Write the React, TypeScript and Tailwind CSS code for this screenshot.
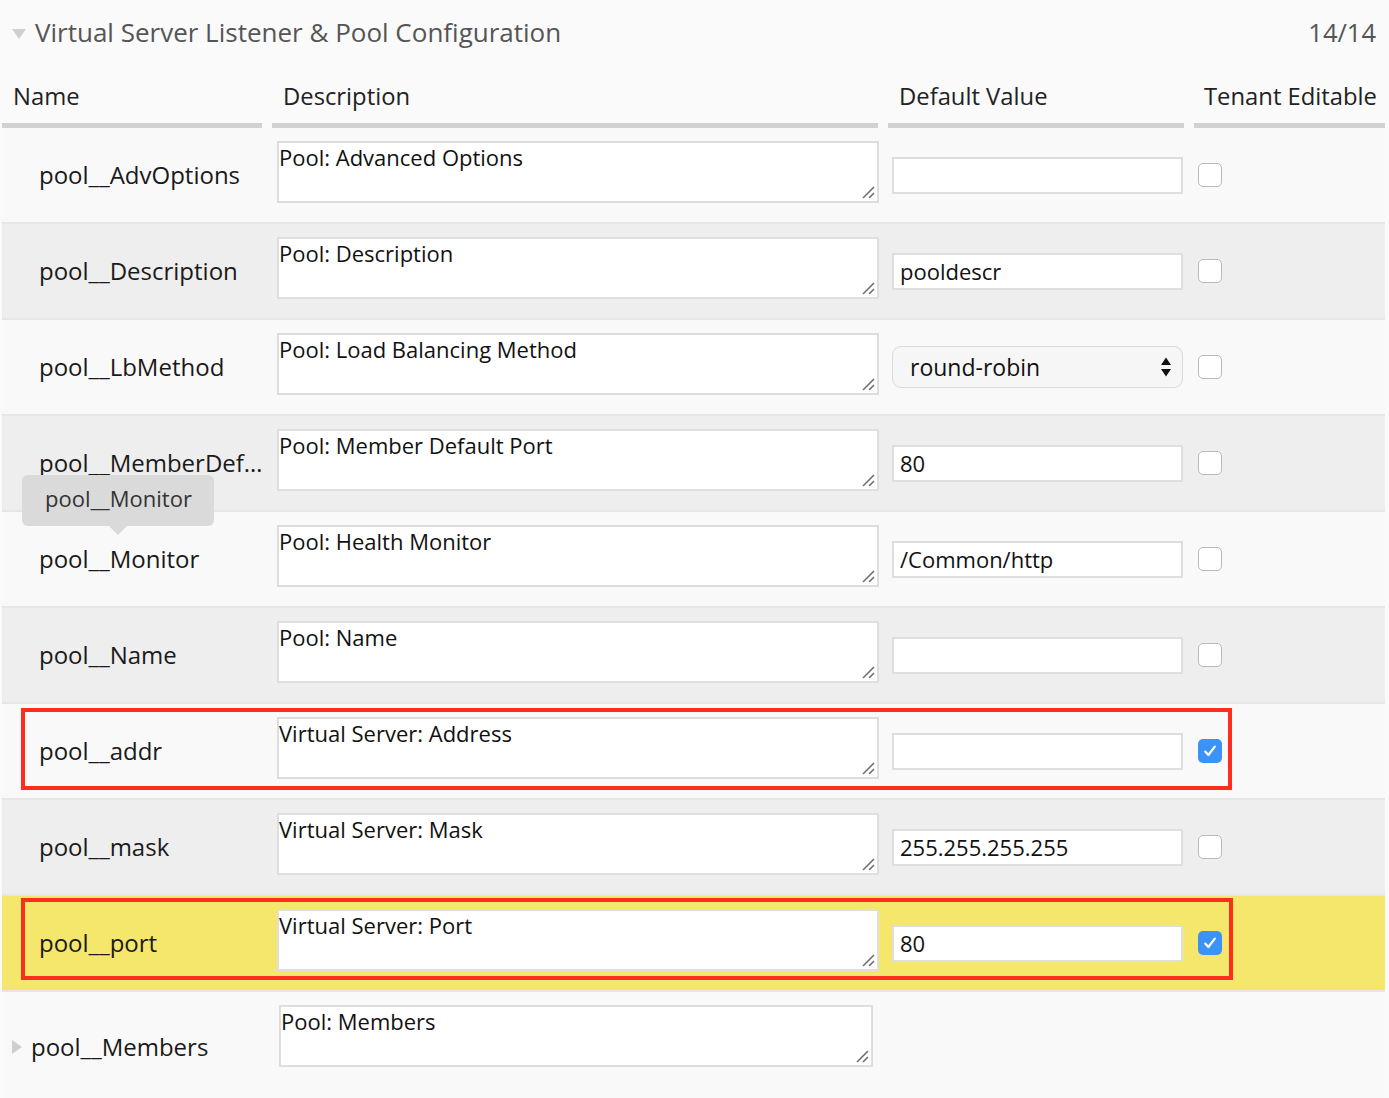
import React from "react";

type Row = {
  name: string;
  desc: string;
  value?: string;
  kind: "input" | "select" | "none";
  checked?: boolean;
  bg: string;
  box?: "a" | "b";
  tooltip?: boolean;
};

const rows: Row[] = [
  { name: "pool__AdvOptions", desc: "Pool: Advanced Options", value: "", kind: "input", bg: "bg-[#f9f9f9]" },
  { name: "pool__Description", desc: "Pool: Description", value: "pooldescr", kind: "input", bg: "bg-[#eeeeee]" },
  { name: "pool__LbMethod", desc: "Pool: Load Balancing Method", value: "round-robin", kind: "select", bg: "bg-[#f9f9f9]" },
  { name: "pool__MemberDefaultPort", desc: "Pool: Member Default Port", value: "80", kind: "input", bg: "bg-[#eeeeee]", tooltip: true },
  { name: "pool__Monitor", desc: "Pool: Health Monitor", value: "/Common/http", kind: "input", bg: "bg-[#f9f9f9]" },
  { name: "pool__Name", desc: "Pool: Name", value: "", kind: "input", bg: "bg-[#eeeeee]" },
  { name: "pool__addr", desc: "Virtual Server: Address", value: "", kind: "input", bg: "bg-[#f9f9f9]", checked: true, box: "a" },
  { name: "pool__mask", desc: "Virtual Server: Mask", value: "255.255.255.255", kind: "input", bg: "bg-[#eeeeee]" },
  { name: "pool__port", desc: "Virtual Server: Port", value: "80", kind: "input", bg: "bg-[#f5e66c]", checked: true, box: "b" },
];

function Resizer() {
  return (
    <svg className="absolute right-[2px] bottom-[2px]" width="14" height="14" viewBox="0 0 14 14">
      <line x1="2" y1="13" x2="13" y2="2" stroke="#6e6e6e" strokeWidth="1.6" />
      <line x1="8" y1="13" x2="13" y2="8" stroke="#6e6e6e" strokeWidth="1.6" />
    </svg>
  );
}

function TextArea({ text, w }: { text: string; w: string }) {
  return (
    <div className={`relative ${w} h-[62px] shrink-0 bg-white border-2 border-[#dedede] pt-[1px] text-[22px] leading-[27px] text-[#111]`}>
      {text}
      <Resizer />
    </div>
  );
}

function Checkbox({ checked }: { checked?: boolean }) {
  if (checked) {
    return (
      <div className="w-[24px] h-[24px] shrink-0 rounded-[5px] bg-[#3b93f8] flex items-center justify-center">
        <svg width="16" height="16" viewBox="0 0 16 16">
          <path d="M3.2 8.6 L6.4 12 L12.8 3.6" fill="none" stroke="white" strokeWidth="2.2" strokeLinecap="round" strokeLinejoin="round" />
        </svg>
      </div>
    );
  }
  return <div className="w-[24px] h-[24px] shrink-0 rounded-[5px] bg-white border border-[#b9b9b9]" />;
}

export default function App() {
  return (
    <div
      className="w-[1389px] h-[1098px] overflow-hidden bg-[#fafafa] text-[#222]"
      style={{ fontFamily: '"Open Sans", "Noto Sans", sans-serif' }}
    >
      {/* Title bar */}
      <div className="h-[66px] flex items-center pl-[12px] pr-[13px]">
        <svg width="14" height="10" viewBox="0 0 14 10" className="mr-[9px] mt-[1px]">
          <path d="M0 0 L14 0 L7 10 Z" fill="#cfcfcf" />
        </svg>
        <div className="text-[26px] leading-[36px] text-[#555] -mt-[2px]">Virtual Server Listener &amp; Pool Configuration</div>
        <div className="ml-auto text-[25.5px] leading-[36px] text-[#555] -mt-[2px]">14/14</div>
      </div>

      {/* Column headers */}
      <div className="flex pl-[2px] h-[62px] text-[23.8px] text-[#222]">
        <div className="w-[260px] flex flex-col">
          <div className="flex-1 flex items-center pl-[11px] pt-[4px]">Name</div>
          <div className="h-[5px] bg-[#d2d2d2]" />
        </div>
        <div className="w-[606px] ml-[10px] flex flex-col">
          <div className="flex-1 flex items-center pl-[11px] pt-[4px]">Description</div>
          <div className="h-[5px] bg-[#d2d2d2]" />
        </div>
        <div className="w-[296px] ml-[10px] flex flex-col">
          <div className="flex-1 flex items-center pl-[11px] pt-[4px]">Default Value</div>
          <div className="h-[5px] bg-[#d2d2d2]" />
        </div>
        <div className="w-[191px] ml-[10px] flex flex-col">
          <div className="flex-1 flex items-center pl-[10px] pt-[4px] whitespace-nowrap">Tenant Editable</div>
          <div className="h-[5px] bg-[#d2d2d2]" />
        </div>
      </div>

      {/* Rows */}
      <div className="ml-[2px] w-[1383px]">
        {rows.map((r) => (
          <div key={r.name} className={`relative h-[96px] border-b-2 border-[#e6e6e6] ${r.bg} flex items-center`}>
            <div className="w-[275px] shrink-0 pl-[37px] pr-[4px] text-[24px] text-[#1a1a1a] truncate">
              {r.name}
            </div>
            <div className="self-start mt-[13px]">
              <TextArea text={r.desc} w="w-[602px]" />
            </div>
            <div className="ml-[13px] w-[291px] shrink-0">
              {r.kind === "input" && (
                <div className="h-[37px] bg-white border-2 border-[#dedede] pl-[6px] flex items-center text-[22px] text-[#111]">
                  {r.value}
                </div>
              )}
              {r.kind === "select" && (
                <div className="h-[42px] rounded-[9px] bg-[#f6f6f6] border border-[#dadada] pl-[17px] pr-[10px] flex items-center text-[23px] text-[#111]">
                  <span>{r.value}</span>
                  <svg className="ml-auto" width="12" height="22" viewBox="0 0 12 22">
                    <path d="M1 9 L6 1.5 L11 9 Z" fill="#111" />
                    <path d="M1 13 L6 20.5 L11 13 Z" fill="#111" />
                  </svg>
                </div>
              )}
            </div>
            <div className="ml-[15px]">
              <Checkbox checked={r.checked} />
            </div>

            {r.box === "a" && (
              <div className="absolute left-[19px] top-[4px] w-[1211px] h-[82px] border-[4px] border-[#fe2e1f] pointer-events-none" />
            )}
            {r.box === "b" && (
              <div className="absolute left-[19px] top-[2px] w-[1212px] h-[82px] border-[4px] border-[#fe2e1f] pointer-events-none" />
            )}
            {r.tooltip && (
              <div className="absolute left-[20px] top-[59px] z-10">
                <div className="w-[192px] h-[51px] rounded-[6px] bg-[#dadada] pl-[23px] pb-[4px] flex items-center text-[22px] text-[#333]">
                  pool__Monitor
                </div>
                <div className="ml-[87px] w-0 h-0 border-l-[9px] border-r-[9px] border-t-[9px] border-l-transparent border-r-transparent border-t-[#dadada]" />
              </div>
            )}
          </div>
        ))}

        {/* Last row */}
        <div className="h-[106px] bg-[#f9f9f9] flex items-center">
          <div className="w-[277px] shrink-0 pl-[10px] pt-[3px] flex items-center text-[24px] text-[#1a1a1a]">
            <svg width="10" height="14" viewBox="0 0 10 14" className="mr-[9px]">
              <path d="M0 0 L10 7 L0 14 Z" fill="#cfcfcf" />
            </svg>
            pool__Members
          </div>
          <div className="self-start mt-[13px]">
            <TextArea text="Pool: Members" w="w-[594px]" />
          </div>
        </div>
      </div>
    </div>
  );
}
